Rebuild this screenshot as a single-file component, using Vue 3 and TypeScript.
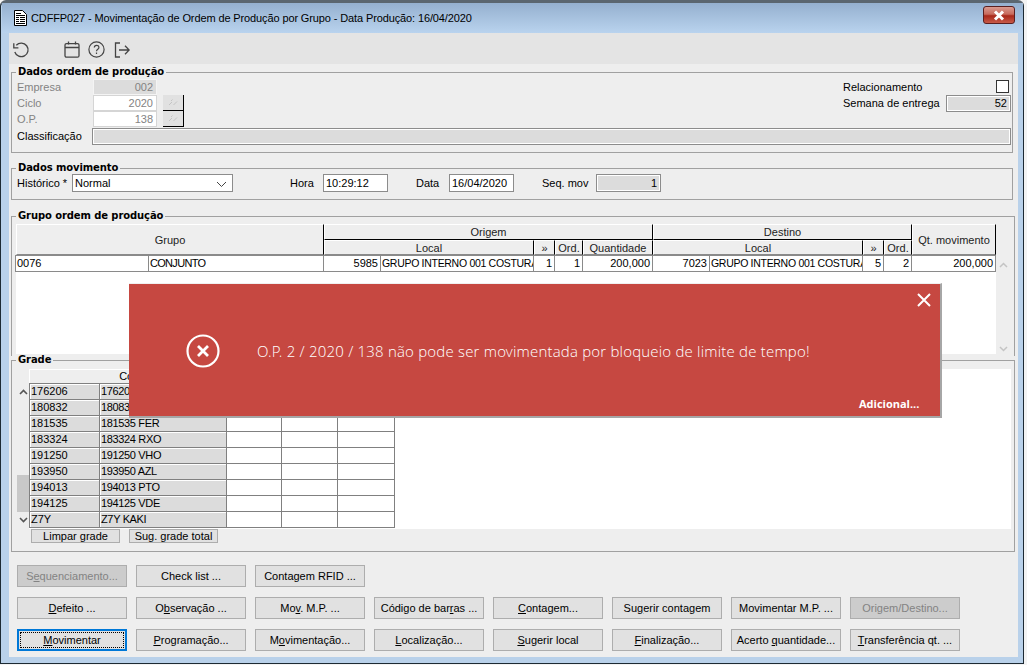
<script setup lang="ts">
interface Btn { a: string; k?: string; b?: string; off?: boolean; focus?: boolean; blank?: boolean }
const btns: Btn[] = [
  { a: 'S', k: 'e', b: 'quenciamento...', off: true }, { a: 'Check list ...' }, { a: 'Contagem RFID ...' },
  { a: '', blank: true }, { a: '', blank: true }, { a: '', blank: true }, { a: '', blank: true }, { a: '', blank: true },
  { a: '', k: 'D', b: 'efeito ...' }, { a: 'O', k: 'b', b: 'servação ...' }, { a: 'Mo', k: 'v', b: '. M.P. ...' },
  { a: 'Código de bar', k: 'r', b: 'as ...' }, { a: '', k: 'C', b: 'ontagem...' }, { a: 'Su', k: 'g', b: 'erir contagem' },
  { a: 'Movimentar M.P. ...' }, { a: 'Origem/Destino...', off: true },
  { a: '', k: 'M', b: 'ovimentar', focus: true }, { a: '', k: 'P', b: 'rogramação...' }, { a: 'M', k: 'o', b: 'vimentação...' },
  { a: '', k: 'L', b: 'ocalização...' }, { a: '', k: 'S', b: 'ugerir local' }, { a: '', k: 'F', b: 'inalização...' },
  { a: 'Acerto ', k: 'q', b: 'uantidade...' }, { a: '', k: 'T', b: 'ransferência qt. ...' },
]
const grade = [
  ['176206', '176206 BCO'], ['180832', '180832 AMR'], ['181535', '181535 FER'], ['183324', '183324 RXO'],
  ['191250', '191250 VHO'], ['193950', '193950 AZL'], ['194013', '194013 PTO'], ['194125', '194125 VDE'], ['Z7Y', 'Z7Y KAKI'],
]
</script>

<template>
  <div class="desk">
    <div class="win">
      <header class="title">
        <svg class="doc" width="13" height="16" viewBox="0 0 13 16">
          <path d="M.5.5h8l4 4v11H.5z" fill="#fff" stroke="#000" />
          <path d="M2 3h5v1H2zM2 5h9v1H2zM2 7h3v1H2zM6 7h5v1H6zM2 9h3v1H2zM6 9h5v1H6zM2 11h3v1H2zM6 11h5v1H6zM2 13h9v1H2z" fill="#000" />
        </svg>
        <span class="title-text">CDFFP027 - Movimentação de Ordem de Produção por Grupo - Data Produção: 16/04/2020</span>
        <div class="close">
          <svg width="14" height="11" viewBox="0 0 14 11"><path d="M3 1.500 11 9.500M11 1.500 3 9.500" stroke="#fff" stroke-width="3" /></svg>
        </div>
      </header>
      <div class="client">
        <nav class="toolbar">
          <svg width="18" height="18" viewBox="0 0 18 18" fill="none" stroke="#444" stroke-width="1.300"><path d="M4.300 4.200A6.800 6.800 0 1 1 2.800 11" /><path d="M1.800 2.200v4.600h4.600" /></svg>
          <svg class="t-cal" width="16" height="17" viewBox="0 0 16 17" fill="none" stroke="#444" stroke-width="1.300"><rect x="1" y="2.600" width="14" height="13.600" rx="1.500" /><path d="M1 6.500h14M4.500.5v3M11.500.5v3" /></svg>
          <svg class="t-help" width="17" height="17" viewBox="0 0 17 17" fill="none" stroke="#444" stroke-width="1.200"><circle cx="8.500" cy="8.500" r="7.600" /><path d="M6.300 6.600c0-3 4.600-3 4.600-.2 0 1.800-2.400 1.900-2.400 3.900M8.500 11.500v1.500" /></svg>
          <svg class="t-exit" width="16" height="16" viewBox="0 0 16 16" fill="none" stroke="#444" stroke-width="1.300"><path d="M6 1H1.500v14H6M5 8h10M11 3.800 15.200 8 11 12.200" /></svg>
        </nav>
        <main class="body">
          <fieldset class="fs fs-order">
            <legend>Dados ordem de produção</legend>
            <div class="order">
              <div class="order-left">
                <span class="lbl off">Empresa</span><span class="inp ro num off">002</span><span></span>
                <span class="lbl off">Ciclo</span><span class="inp num off">2020</span>
                <span class="pick"><svg width="10" height="7" viewBox="0 0 10 7" fill="none" stroke="#c4c4c4"><path d="M1 6l3-3M5.500 6l3.500-3.500M3 2 4.500.5" /></svg></span>
                <span class="lbl off">O.P.</span><span class="inp num off">138</span>
                <span class="pick"><svg width="10" height="7" viewBox="0 0 10 7" fill="none" stroke="#c4c4c4"><path d="M1 6l3-3M5.500 6l3.500-3.500M3 2 4.500.5" /></svg></span>
              </div>
              <div class="order-right">
                <span class="lbl">Relacionamento</span><span class="check"></span>
                <span class="lbl">Semana de entrega</span><span class="inp ro2 num">52</span>
              </div>
            </div>
            <div class="class-row"><span class="lbl">Classificação</span><span class="inp class-inp"></span></div>
          </fieldset>

          <fieldset class="fs fs-move">
            <legend>Dados movimento</legend>
            <div class="move">
              <span class="lbl hist">Histórico *</span>
              <span class="field select">Normal
                <svg width="11" height="7" viewBox="0 0 11 7" fill="none" stroke="#444"><path d="M1 1l4.500 4.500L10 1" /></svg>
              </span>
              <span class="lbl hora">Hora</span><span class="field f-time">10:29:12</span>
              <span class="lbl data">Data</span><span class="field f-time">16/04/2020</span>
              <span class="lbl seq">Seq. mov</span><span class="field ro-seq num">1</span>
            </div>
          </fieldset>

          <fieldset class="fs fs-group">
            <legend>Grupo ordem de produção</legend>
            <div class="grid-wrap">
              <div class="grid-area">
                <div class="thead">
                  <div class="h h-grupo">Grupo</div>
                  <div class="h h-or">Origem</div>
                  <div class="h h-de">Destino</div>
                  <div class="h h-qt">Qt. movimento</div>
                  <div class="h">Local</div><div class="h">»</div><div class="h">Ord.</div><div class="h">Quantidade</div>
                  <div class="h">Local</div><div class="h">»</div><div class="h">Ord.</div>
                </div>
                <div class="tbody">
                  <span>0076</span><span class="caps">CONJUNTO</span><span class="r">5985</span><span class="clip">GRUPO INTERNO 001 COSTURA</span>
                  <span class="r">1</span><span class="r">1</span><span class="r">200,000</span><span class="r">7023</span>
                  <span class="clip">GRUPO INTERNO 001 COSTURA</span><span class="r">5</span><span class="r">2</span><span class="r">200,000</span>
                </div>
              </div>
              <div class="vscroll">
                <svg width="9" height="6" viewBox="0 0 9 6" fill="none" stroke="#c4c4c4" stroke-width="1.500"><path d="M1 5l3.500-3.500L8 5" /></svg>
                <svg width="9" height="6" viewBox="0 0 9 6" fill="none" stroke="#c4c4c4" stroke-width="1.500"><path d="M1 1l3.500 3.500L8 1" /></svg>
              </div>
            </div>
          </fieldset>

          <fieldset class="fs fs-grade">
            <legend>Grade</legend>
            <div class="grade-panel">
              <div class="grade-side">
                <svg width="9" height="6" viewBox="0 0 9 6" fill="none" stroke="#555" stroke-width="1.600"><path d="M1 5l3.500-3.500L8 5" /></svg>
                <span class="thumb"></span>
                <svg width="9" height="6" viewBox="0 0 9 6" fill="none" stroke="#555" stroke-width="1.600"><path d="M1 1l3.500 3.500L8 1" /></svg>
              </div>
              <div class="grade-main">
                <div class="grade-head">Cor</div>
                <div class="grade-body">
                  <template v-for="row in grade" :key="row[0]">
                    <span class="g">{{ row[0] }}</span><span class="g desc">{{ row[1] }}</span><span class="w"></span><span class="w"></span><span class="w"></span>
                  </template>
                </div>
              </div>
            </div>
            <div class="grade-btns">
              <button class="mini">Limpar grade</button>
              <button class="mini">Sug. grade total</button>
            </div>
          </fieldset>

          <div class="actions">
            <template v-for="(b, i) in btns" :key="i">
              <span v-if="b.blank"></span>
              <button v-else class="act" :class="{ off: b.off, focus: b.focus }"><span class="act-in">{{ b.a }}<u v-if="b.k">{{ b.k }}</u>{{ b.b }}</span></button>
            </template>
          </div>
        </main>
      </div>

      <aside class="toast">
        <svg class="x-top" width="14" height="14" viewBox="0 0 14 14"><path d="M1 1l12 12M13 1 1 13" stroke="#fff" stroke-width="2" /></svg>
        <svg class="x-circle" width="34" height="34" viewBox="0 0 34 34" fill="none" stroke="#fff"><circle cx="17" cy="17" r="15.500" stroke-width="2.200" /><path d="M12 12l10 10M22 12 12 22" stroke-width="2.800" /></svg>
        <p class="msg">O.P. 2 / 2020 / 138 não pode ser movimentada por bloqueio de limite de tempo!</p>
        <b class="more">Adicional...</b>
      </aside>
    </div>
  </div>
</template>

<style>
html, body { margin: 0; background: #f3f3f3; }
</style>

<style scoped>
* { box-sizing: border-box; }
.desk { width: 1027px; height: 665px; overflow: hidden; font: 11px/14px "Liberation Sans", Arial, sans-serif; color: #000; }
.win { position: relative; width: 1024px; height: 664px; padding: 0 5px 6px 8px; border: 1px solid #1d2a33; border-top: 3px solid #5b6670; border-radius: 6px 6px 0 0; background: #b9d1ea; display: flex; flex-direction: column; }
.title { height: 30px; margin: 0 -5px 0 -7px; padding: 0 7px 0 12px; display: flex; align-items: center; gap: 4px; background: linear-gradient(#95b0cf, #b9d3ee); flex: none; }
.title-text { font: 11px "Liberation Sans", sans-serif; color: #000; letter-spacing: -.12px; }
.close { margin-left: auto; margin-right: 1px; width: 32px; height: 18px; margin-top: -6px; border: 1px solid #5a1f1f; border-radius: 3px; background: linear-gradient(#d99a90 0, #c86a5c 45%, #a8281a 55%, #c85a48 100%); display: flex; align-items: center; justify-content: center; }
.client { flex: 1; min-height: 0; display: flex; flex-direction: column; background: #eee; }
.toolbar { height: 31px; flex: none; background: #e4e4e4; display: flex; align-items: center; padding: 2px 0 0 3px; }
.t-cal { margin-left: 34px; }
.t-help { margin-left: 8px; }
.t-exit { margin-left: 9px; }
.body { flex: 1; padding: 0 0 0 2px; }

.fs { margin: 0; padding: 0; border: 1px solid #a0a0a0; min-width: 0; display: block; }
.fs legend { margin-left: 4px; padding: 0 2px; font: bold 10px/16px "DejaVu Sans", sans-serif; letter-spacing: -.1px; }
.lbl { color: #000; white-space: nowrap; }
.off { color: #838383; }

.fs-order { width: 1002px; height: 89px; }
.order { display: flex; justify-content: space-between; padding: 0 1px 0 5px; margin-top: -1px; height: 49px; }
.order-left { display: grid; grid-template-columns: 76px 64px 27px; grid-auto-rows: 16px; }
.order-left .lbl { line-height: 16px; }
.pick { display: flex; align-items: center; justify-content: center; width: 21px; height: 16px; margin-left: 6px; background: #e1e1e1; border-right: 1px solid #000; border-bottom: 1px solid #000; }
.inp { display: block; height: 16px; line-height: 15px; background: #fff; border: 1px solid #d5d5d5; padding: 0 3px; }
.num { text-align: right; }
.ro { background: #dcdcdc; border-color: #f4f4f4; }
.ro2 { width: 65px; height: 17px; background: #dcdcdc; border: 1px solid #8c8c8c; outline: 1px solid #fff; outline-offset: -2px; }
.order-right { display: grid; grid-template-columns: 103px 65px; grid-auto-rows: 16px; }
.order-right .lbl { line-height: 16px; }
.check { width: 13px; height: 13px; background: #fff; border: 1px solid #333; justify-self: end; margin: 1px 2px 0 0; }
.class-row { display: flex; height: 17px; padding-left: 5px; }
.class-row .lbl { width: 75px; line-height: 16px; }
.class-inp { width: 919px; height: 17px; background: #dcdcdc; border: 1px solid #8c8c8c; outline: 1px solid #fff; outline-offset: -2px; }

.fs-move { width: 1002px; height: 40px; margin-top: 7px; }
.move { display: flex; align-items: center; height: 18px; padding-left: 5px; margin-top: -2px; }
.field { height: 18px; line-height: 15px; padding: 1px 2px; background: #fff; border: 1px solid #8c8c8c; white-space: nowrap; }
.select { width: 161px; margin-left: 1px; display: flex; justify-content: space-between; align-items: center; padding: 0 3px 0 2px; }
.select svg { margin-top: 3px; margin-right: 2px; }
.hist { width: 54px; }
.hora { margin-left: 57px; width: 33px; }
.f-time { width: 65px; }
.data { margin-left: 28px; width: 33px; }
.seq { margin-left: 28px; width: 54px; }
.ro-seq { width: 65px; background: #dcdcdc; padding-right: 3px; outline: 1px solid #fff; outline-offset: -2px; }

.fs-group { width: 1004px; height: 148px; margin-top: 8px; border-bottom: 0; }
.grid-wrap { display: flex; padding: 0 0 0 4px; }
.grid-area { width: 980px; height: 130px; background: #fff; }
.thead { display: grid; grid-template-columns: 308px 210px 21px 28px 70px 210px 21px 28px 84px; grid-template-rows: 16px 15px; height: 31px; background: #eee; }
.h { display: flex; align-items: center; justify-content: center; background: #eee; border-right: 1px solid #000; border-bottom: 1px solid #8a8a8a; border-top: 1px solid #fff; border-left: 1px solid #fff; color: #222; overflow: hidden; }
.h-grupo { grid-row: span 2; }
.h-or { grid-column: span 4; border-bottom-color: #000; }
.h-de { grid-column: span 3; border-bottom-color: #000; }
.h-qt { grid-row: span 2; }
.tbody { display: grid; grid-template-columns: 133px 175px 57px 153px 21px 28px 70px 57px 153px 21px 28px 84px; height: 17px; border: 1px solid #8a8a8a; border-width: 1px 0 1px 1px; margin-left: -1px; width: 981px; }
.tbody span { padding: 0 2px 0 1px; line-height: 15px; border-right: 1px solid #8a8a8a; white-space: nowrap; overflow: hidden; }
.r { text-align: right; }
.tbody .caps { letter-spacing: -.7px; }
.tbody .clip { font-size: 10.500px; letter-spacing: -.3px; padding-right: 0; }
.vscroll { width: 15px; height: 130px; padding: 38px 0 2px; display: flex; flex-direction: column; align-items: center; justify-content: space-between; }

.fs-grade { width: 1004px; height: 200px; margin-top: -4px; }
.grade-panel { display: flex; margin: 1px 3px 0 5px; height: 160px; background: #fff; }
.grade-side { width: 12px; height: 160px; background: #eee; display: flex; flex-direction: column; align-items: center; padding: 20px 0 6px; }
.thumb { flex: none; width: 12px; height: 37px; background: #c8c8c8; margin-top: 80px; }
.grade-side svg:last-child { margin-top: auto; }
.grade-main { width: 365px; background: linear-gradient(#fff, #fff) 197px 0 / 168px 14px no-repeat, transparent; }
.grade-head { width: 197px; height: 14px; background: #eee; border-top: 1px solid #fff; border-left: 1px solid #fff; text-align: center; line-height: 13px; }
.grade-body { display: grid; grid-template-columns: 70px 127px 55px 56px 57px; grid-auto-rows: 16px; border-top: 1px solid #808080; border-left: 1px solid #808080; }
.g, .w { border-right: 1px solid #808080; border-bottom: 1px solid #808080; }
.g { background: #dcdcdc; box-shadow: inset 1px 1px 0 #fff; padding: 0 1px; line-height: 15px; }
.desc { letter-spacing: -.35px; }
.w { background: #fff; }
.grade-btns { display: flex; gap: 9px; padding-left: 19px; }
.mini { width: 89px; height: 14px; padding: 0; background: #e1e1e1; border: 1px solid #adadad; font: 11px/11px "Liberation Sans", Arial, sans-serif; color: #000; }

.actions { display: grid; grid-template-columns: repeat(8, 110px); grid-auto-rows: 22px; gap: 10px 9px; padding: 13px 0 0 6px; }
.act { padding: 0; background: #e1e1e1; border: 1px solid #adadad; font: 11px "Liberation Sans", Arial, sans-serif; color: #000; white-space: nowrap; }
.act.off { background: #ccc; color: #838383; }
.act.focus { border: 2px solid #0078d7; padding: 1px; }
.act.focus .act-in { display: flex; align-items: center; justify-content: center; height: 100%; border: 1px dotted #000; }

.toast { position: absolute; left: 128px; top: 280px; width: 813px; height: 135px; background: #c64841; border-top: 1px solid #f0f0f0; border-right: 2px solid #a6a6a6; border-bottom: 2px solid #a6a6a6; color: #fff; }
.x-top { position: absolute; left: 788px; top: 9px; }
.x-circle { position: absolute; left: 57px; top: 50px; }
.msg { position: absolute; left: 128px; top: 57px; margin: 0; font: 300 15px/20px "Open Sans Light", "Open Sans", sans-serif; white-space: nowrap; letter-spacing: .2px; }
.more { position: absolute; left: 730px; top: 113px; font: bold 11px/14px "Open Sans", sans-serif; }
</style>
